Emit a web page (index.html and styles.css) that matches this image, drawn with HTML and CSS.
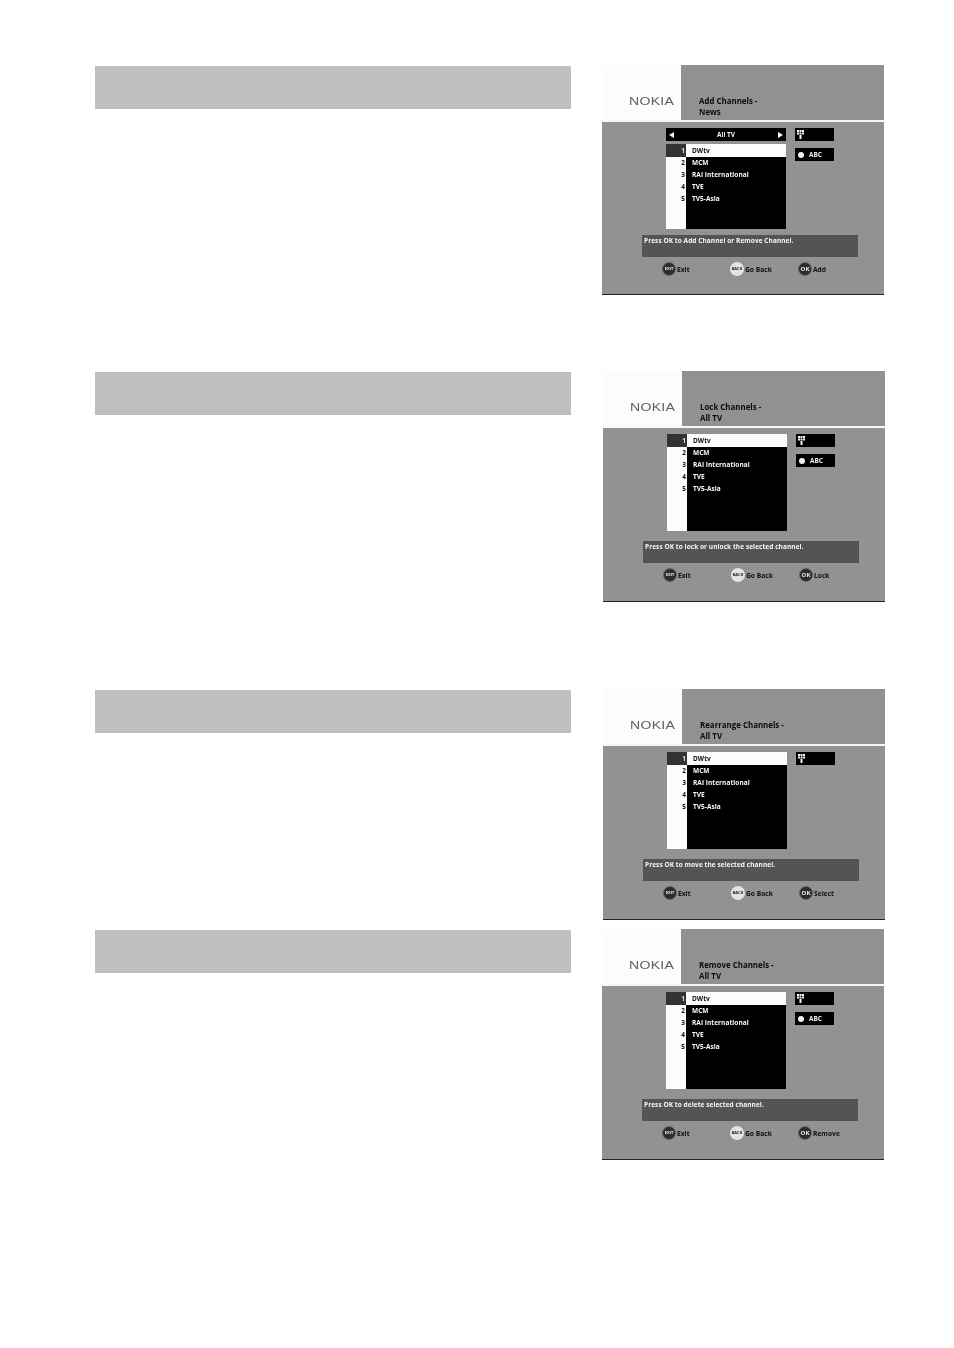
FILE: index.html
```html
<!DOCTYPE html>
<html lang="en">
<head>
<meta charset="utf-8">
<title>Channel management</title>
<link rel="stylesheet" href="styles.css">
</head>
<body>
<main class="page">

<section class="row row-add">
  <div class="bar"></div>
  <div class="screen">
    <header class="head"><div class="logo-area"><span class="logo">NOKIA</span></div><div class="title-area"><p>Add Channels -</p><p>News</p></div></header>
    <div class="body">
      <div class="content">
        <div class="main">
          <div class="tab"><svg class="arrow" viewBox="0 0 5 6"><path d="M0 3 5 0V6Z"/></svg><span>All TV</span><svg class="arrow" viewBox="0 0 5 6"><path d="M5 3 0 0V6Z"/></svg></div>
          <div class="list short">
            <ol class="nums"><li>1</li><li>2</li><li>3</li><li>4</li><li>5</li></ol>
            <ul class="names"><li>DWtv</li><li>MCM</li><li>RAI International</li><li>TVE</li><li>TV5-Asia</li></ul>
          </div>
        </div>
        <div class="side">
          <div class="key"><svg class="keypad" viewBox="0 0 7 9"><path d="M0 0h2v2H0zM2.500 0h2v2h-2zM5 0h2v2H5zM0 2.500h2v2H0zM2.500 2.500h2v2h-2zM5 2.500h2v2H5zM2.500 5h2v4h-2z"/></svg></div>
          <div class="key key-abc"><i class="dot"></i><span>ABC</span></div>
        </div>
      </div>
      <p class="hint">Press OK to Add Channel or Remove Channel.</p>
      <div class="actions">
        <div class="act"><i class="btn btn-dark">EXIT</i><span>Exit</span></div>
        <div class="act"><i class="btn btn-light">BACK</i><span>Go Back</span></div>
        <div class="act"><i class="btn btn-dark btn-ok">OK</i><span>Add</span></div>
      </div>
    </div>
  </div>
</section>

<section class="row row-lock">
  <div class="bar"></div>
  <div class="screen tall">
    <header class="head"><div class="logo-area"><span class="logo">NOKIA</span></div><div class="title-area"><p>Lock Channels -</p><p>All TV</p></div></header>
    <div class="body">
      <div class="content">
        <div class="main">
          <div class="list">
            <ol class="nums"><li>1</li><li>2</li><li>3</li><li>4</li><li>5</li></ol>
            <ul class="names"><li>DWtv</li><li>MCM</li><li>RAI International</li><li>TVE</li><li>TV5-Asia</li></ul>
          </div>
        </div>
        <div class="side">
          <div class="key"><svg class="keypad" viewBox="0 0 7 9"><path d="M0 0h2v2H0zM2.500 0h2v2h-2zM5 0h2v2H5zM0 2.500h2v2H0zM2.500 2.500h2v2h-2zM5 2.500h2v2H5zM2.500 5h2v4h-2z"/></svg></div>
          <div class="key key-abc"><i class="dot"></i><span>ABC</span></div>
        </div>
      </div>
      <p class="hint">Press OK to lock or unlock the selected channel.</p>
      <div class="actions">
        <div class="act"><i class="btn btn-dark">EXIT</i><span>Exit</span></div>
        <div class="act"><i class="btn btn-light">BACK</i><span>Go Back</span></div>
        <div class="act"><i class="btn btn-dark btn-ok">OK</i><span>Lock</span></div>
      </div>
    </div>
  </div>
</section>

<section class="row row-move">
  <div class="bar"></div>
  <div class="screen tall">
    <header class="head"><div class="logo-area"><span class="logo">NOKIA</span></div><div class="title-area"><p>Rearrange Channels -</p><p>All TV</p></div></header>
    <div class="body">
      <div class="content">
        <div class="main">
          <div class="list">
            <ol class="nums"><li>1</li><li>2</li><li>3</li><li>4</li><li>5</li></ol>
            <ul class="names"><li>DWtv</li><li>MCM</li><li>RAI International</li><li>TVE</li><li>TV5-Asia</li></ul>
          </div>
        </div>
        <div class="side">
          <div class="key"><svg class="keypad" viewBox="0 0 7 9"><path d="M0 0h2v2H0zM2.500 0h2v2h-2zM5 0h2v2H5zM0 2.500h2v2H0zM2.500 2.500h2v2h-2zM5 2.500h2v2H5zM2.500 5h2v4h-2z"/></svg></div>
        </div>
      </div>
      <p class="hint">Press OK to move the selected channel.</p>
      <div class="actions">
        <div class="act"><i class="btn btn-dark">EXIT</i><span>Exit</span></div>
        <div class="act"><i class="btn btn-light">BACK</i><span>Go Back</span></div>
        <div class="act"><i class="btn btn-dark btn-ok">OK</i><span>Select</span></div>
      </div>
    </div>
  </div>
</section>

<section class="row row-remove">
  <div class="bar"></div>
  <div class="screen tall">
    <header class="head"><div class="logo-area"><span class="logo">NOKIA</span></div><div class="title-area"><p>Remove Channels -</p><p>All TV</p></div></header>
    <div class="body">
      <div class="content">
        <div class="main">
          <div class="list">
            <ol class="nums"><li>1</li><li>2</li><li>3</li><li>4</li><li>5</li></ol>
            <ul class="names"><li>DWtv</li><li>MCM</li><li>RAI International</li><li>TVE</li><li>TV5-Asia</li></ul>
          </div>
        </div>
        <div class="side">
          <div class="key"><svg class="keypad" viewBox="0 0 7 9"><path d="M0 0h2v2H0zM2.500 0h2v2h-2zM5 0h2v2H5zM0 2.500h2v2H0zM2.500 2.500h2v2h-2zM5 2.500h2v2H5zM2.500 5h2v4h-2z"/></svg></div>
          <div class="key key-abc"><i class="dot"></i><span>ABC</span></div>
        </div>
      </div>
      <p class="hint">Press OK to delete selected channel.</p>
      <div class="actions">
        <div class="act"><i class="btn btn-dark">EXIT</i><span>Exit</span></div>
        <div class="act"><i class="btn btn-light">BACK</i><span>Go Back</span></div>
        <div class="act"><i class="btn btn-dark btn-ok">OK</i><span>Remove</span></div>
      </div>
    </div>
  </div>
</section>

</main>
</body>
</html>
```
FILE: styles.css
```css
* { box-sizing: border-box; }
html, body { margin: 0; padding: 0; background: #fff; }
body { width: 954px; height: 1348px; overflow: hidden; font-family: "Open Sans", "Liberation Sans", sans-serif; }
p, ol, ul { margin: 0; padding: 0; list-style: none; }
i { font-style: normal; display: block; }

.page { padding: 65px 0 0 95px; }
.row { display: flex; align-items: flex-start; }
.row-lock { margin-top: 76px; }
.row-move { margin-top: 87px; }
.row-remove { margin-top: 9px; }
.row-lock .screen, .row-move .screen { margin-left: 32px; }

.bar { width: 476px; height: 43px; margin-top: 1px; background: #bfbfbf; flex: none; }

.screen { width: 282px; height: 230px; margin-left: 31px; flex: none; display: flex; flex-direction: column; background: #919191; border-bottom: 1px solid #222; filter: blur(.5px); }
.screen.tall { height: 231px; }

.head { height: 55px; display: flex; flex: none; }
.logo-area { width: 79px; background: #fcfcfc; padding: 29px 0 0 27px; }
.logo { display: block; font: 400 11px/14px "Liberation Sans", sans-serif; letter-spacing: .2px; color: #606060; transform: scaleX(1.28); transform-origin: left center; }
.title-area { flex: 1; background: #919191; padding: 31px 0 0 18px; font-size: 7.900px; line-height: 10.500px; font-weight: 700; color: #0c0c0c; }

.body { flex: 1; border-top: 2px solid #f8f8f8; background: #929292; display: flex; flex-direction: column; }
.content { height: 107px; padding: 6px 0 0 64px; display: flex; gap: 9px; flex: none; }
.main { width: 120px; display: flex; flex-direction: column; gap: 3px; }
.tab { height: 13px; background: #000; color: #f8f8f8; display: flex; align-items: center; justify-content: space-between; padding: 0 3px; font-size: 6.500px; font-weight: 700; }
.arrow { width: 5px; height: 6px; fill: #f8f8f8; }

.list { height: 97px; display: flex; background: #000; }
.list.short { height: 85px; }
.nums { width: 20px; background: #fcfcfc; color: #111; font-size: 6.500px; font-weight: 700; text-align: right; padding-right: 1px; }
.nums li { height: 12px; line-height: 12px; }
.nums li:first-child { background: #333; color: #ddd; margin-right: -1px; padding-right: 1px; height: 13px; line-height: 13px; }
.names { flex: 1; color: #fafafa; font-size: 6.500px; font-weight: 700; letter-spacing: .05px; }
.names li { height: 12px; line-height: 12px; padding-left: 6px; }
.names li:first-child { height: 13px; line-height: 13px; background: #fcfcfc; color: #111; }

.side { width: 39px; display: flex; flex-direction: column; gap: 7px; }
.key { height: 13px; background: #000; color: #eee; display: flex; align-items: center; padding-left: 2px; font-size: 6.500px; font-weight: 700; }
.keypad { width: 7px; height: 9px; fill: #f4f4f4; }
.key-abc { padding-left: 3px; gap: 5px; }
.dot { width: 6px; height: 6px; border-radius: 50%; background: #f0f0f0; }

.hint { width: 216px; height: 22px; margin: 6px 0 0 40px; padding: 1px 2px; background: #545454; color: #f8f8f8; font-size: 6.500px; line-height: 9px; font-weight: 700; letter-spacing: .07px; white-space: nowrap; }

.actions { display: grid; grid-template-columns: 68px 68px 1fr; padding: 5px 0 0 60px; }
.act { display: flex; align-items: center; gap: 1px; height: 14px; color: #111; font-size: 6.700px; font-weight: 700; }
.btn { width: 14px; height: 14px; border-radius: 50%; text-align: center; font-size: 4px; line-height: 14px; font-weight: 700; flex: none; }
.btn-dark { background: #2c2c2c; color: #eee; border: 1px solid #666; line-height: 12px; }
.btn-light { background: #e4e4e4; color: #222; }
.btn-ok { font-size: 6px; }
```
